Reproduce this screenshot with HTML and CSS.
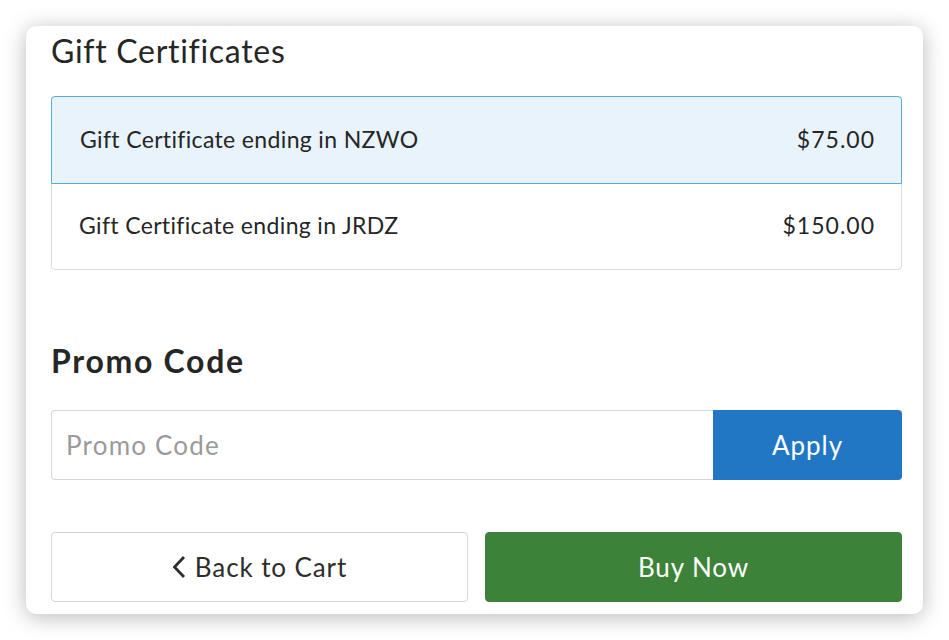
FILE: index.html
```html
<!DOCTYPE html>
<html>
<head>
<meta charset="utf-8">
<link rel="stylesheet" href="styles.css">
</head>
<body>
<div class="card">
  <h2 class="title">Gift Certificates</h2>
  <div class="list">
    <div class="row selected"><span>Gift Certificate ending in NZWO</span><span class="price">$75.00</span></div>
    <div class="row"><span>Gift Certificate ending in JRDZ</span><span class="price">$150.00</span></div>
  </div>
  <h2 class="promo-title">Promo Code</h2>
  <div class="promo">
    <input class="promo-input" type="text" placeholder="Promo Code">
    <button class="apply">Apply</button>
  </div>
  <div class="actions">
    <button class="btn back"><svg class="chev" width="14" height="24" viewBox="0 0 14 24"><polyline points="12,2 2.5,12 12,22" fill="none" stroke="#2d2d2d" stroke-width="2.8" stroke-linejoin="miter"/></svg>Back to Cart</button>
    <button class="btn buy">Buy Now</button>
  </div>
</div>
</body>
</html>
```
FILE: styles.css
```css
html, body {
  margin: 0;
  padding: 0;
  background: #ffffff;
}
body {
  font-family: Lato, "Open Sans", sans-serif;
  color: #2d2d2d;
  padding: 26px 26px 0 26px;
  height: 640px;
  box-sizing: border-box;
  overflow: hidden;
}
.card {
  width: 897px;
  height: 588px;
  box-sizing: border-box;
  padding: 7px 21px 0 25px;
  background: #fff;
  border-radius: 10px;
  box-shadow: 0 3px 22px rgba(0, 0, 0, 0.28);
}
.title {
  margin: 0;
  font-size: 32px;
  line-height: 36px;
  font-weight: 400;
  letter-spacing: 0.7px;
  color: #262626;
}
.list {
  margin-top: 27px;
  border: 1px solid #dcdcdc;
  border-radius: 4px;
}
.row {
  display: flex;
  justify-content: space-between;
  align-items: center;
  height: 85px;
  box-sizing: border-box;
  padding: 0 27px 3px 27px;
  font-size: 23px;
  letter-spacing: 0.35px;
  color: #262626;
}
.price {
  letter-spacing: 1px;
  margin-right: -1px;
}
.row.selected {
  margin: -1px -1px 0 -1px;
  height: 88px;
  padding: 0 27px 3px 28px;
  border: 1px solid #5aaae0;
  border-radius: 4px 4px 0 0;
  background: #e8f3fb;
}
.promo-title {
  margin: 73px 0 0 0;
  font-size: 32px;
  line-height: 36px;
  font-weight: 700;
  letter-spacing: 1.7px;
  color: #262626;
}
.promo {
  display: flex;
  margin-top: 31px;
  height: 70px;
}
.promo-input {
  flex: 1;
  min-width: 0;
  box-sizing: border-box;
  height: 70px;
  border: 1px solid #d6d6d6;
  border-right: none;
  border-radius: 4px 0 0 4px;
  padding: 0 14px;
  font-family: Lato, "Open Sans", sans-serif;
  font-size: 26px;
  letter-spacing: 1.2px;
  color: #2d2d2d;
  outline: none;
}
.promo-input::placeholder {
  color: #9a9a9a;
}
.apply {
  width: 189px;
  height: 70px;
  border: none;
  border-radius: 0 4px 4px 0;
  background: #2277c5;
  color: #fff;
  font-family: Lato, "Open Sans", sans-serif;
  font-size: 26px;
  letter-spacing: 1px;
}
.actions {
  display: flex;
  gap: 17px;
  margin-top: 52px;
}
.btn {
  flex: 1;
  height: 70px;
  display: flex;
  align-items: center;
  justify-content: center;
  border-radius: 4px;
  font-family: Lato, "Open Sans", sans-serif;
  font-size: 26px;
  letter-spacing: 0.9px;
}
.back {
  background: #fff;
  border: 1px solid #d6d6d6;
  color: #2d2d2d;
}
.chev {
  margin-right: 9px;
}
.buy {
  background: #3c8239;
  border: 1px solid #3c8239;
  color: #fff;
}
```
